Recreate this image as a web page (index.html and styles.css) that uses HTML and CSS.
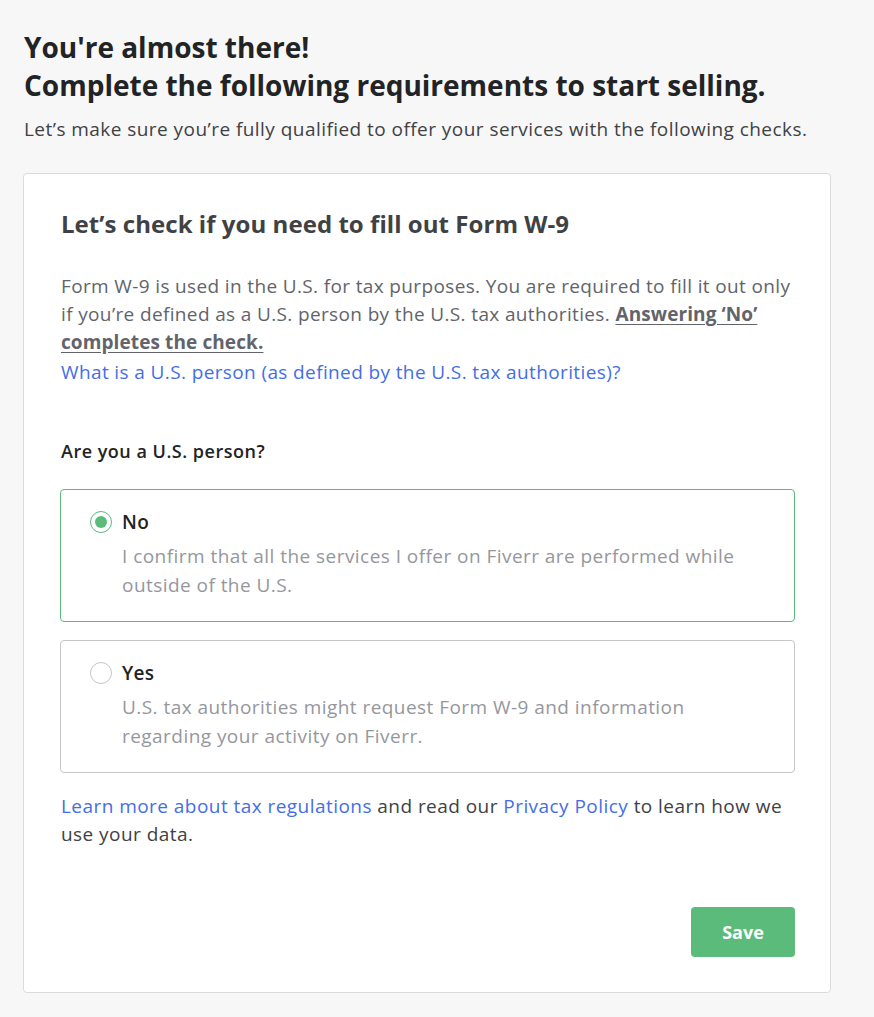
FILE: index.html
```html
<!DOCTYPE html>
<html lang="en">
<head>
<meta charset="utf-8">
<title>Requirements</title>
<link rel="stylesheet" href="styles.css">
</head>
<body>
<main class="page">
  <h1 class="headline">You're almost there!<br>Complete the following requirements to start selling.</h1>
  <p class="subtitle">Let’s make sure you’re fully qualified to offer your services with the following checks.</p>

  <section class="card">
    <h2 class="card-title">Let’s check if you need to fill out Form W-9</h2>
    <p class="intro">Form W-9 is used in the U.S. for tax purposes. You are required to fill it out only if you’re defined as a U.S. person by the U.S. tax authorities. <strong class="emph">Answering ‘No’ completes the check.</strong></p>
    <a class="link block-link" href="#">What is a U.S. person (as defined by the U.S. tax authorities)?</a>

    <p class="question">Are you a U.S. person?</p>

    <div class="options">
      <label class="option selected">
        <span class="radio checked"><span class="dot"></span></span>
        <span class="option-body">
          <span class="option-label">No</span>
          <span class="option-desc">I confirm that all the services I offer on Fiverr are performed while outside of the U.S.</span>
        </span>
      </label>
      <label class="option">
        <span class="radio"></span>
        <span class="option-body">
          <span class="option-label">Yes</span>
          <span class="option-desc">U.S. tax authorities might request Form W-9 and information regarding your activity on Fiverr.</span>
        </span>
      </label>
    </div>

    <p class="footnote"><a class="link" href="#">Learn more about tax regulations</a> and read our <a class="link" href="#">Privacy Policy</a> to learn how we use your data.</p>

    <div class="actions">
      <button class="save" type="button">Save</button>
    </div>
  </section>
</main>
</body>
</html>
```

FILE: styles.css
```css
* { box-sizing: border-box; }

html, body {
  margin: 0;
  background: #f7f7f7;
}

body {
  font-family: "Open Sans", "Liberation Sans", sans-serif;
  color: #62646a;
}

.page {
  padding: 28px 43px 24px 23px;
}

.headline {
  margin: 0 0 0 1px;
  font-size: 28px;
  line-height: 38px;
  font-weight: 700;
  color: #222325;
}

.subtitle {
  margin: 13px 0 0 1px;
  font-size: 19px;
  line-height: 24px;
  letter-spacing: 0.45px;
  color: #404145;
}

.card {
  margin-top: 32px;
  background: #fff;
  border: 1px solid #dadbdd;
  border-radius: 4px;
  padding: 35px 35px 35px 37px;
}

.card-title {
  margin: 0;
  font-size: 24px;
  line-height: 30px;
  font-weight: 700;
  letter-spacing: 0.05px;
  color: #404145;
}

.intro {
  margin: 33px 0 0;
  font-size: 19px;
  line-height: 28px;
  letter-spacing: 0.36px;
  color: #62646a;
}

.emph {
  font-weight: 700;
  color: #62646a;
  letter-spacing: 0.1px;
  text-decoration: underline;
  text-underline-offset: 3px;
}

.link {
  color: #446ee7;
  text-decoration: none;
}

.block-link {
  display: block;
  margin-top: 2px;
  font-size: 19px;
  line-height: 28px;
  letter-spacing: 0.38px;
}

.question {
  margin: 53px 0 0;
  font-size: 18px;
  line-height: 24px;
  letter-spacing: 0.5px;
  font-weight: 600;
  color: #222325;
}

.options {
  margin-top: 26px;
  margin-left: -1px;
  display: flex;
  flex-direction: column;
  gap: 18px;
}

.option {
  display: flex;
  align-items: flex-start;
  gap: 10px;
  border: 1px solid #c5c6c9;
  border-radius: 4px;
  padding: 20px 20px 21px 29px;
  cursor: pointer;
}

.option.selected {
  border-color: #5bbb7b;
}

.radio {
  flex: none;
  width: 22px;
  height: 22px;
  margin-top: 1px;
  border: 1px solid #c5c6c9;
  border-radius: 50%;
  display: flex;
  align-items: center;
  justify-content: center;
}

.radio.checked {
  border-color: #5bbb7b;
}

.dot {
  width: 12px;
  height: 12px;
  border-radius: 50%;
  background: #5bbb7b;
}

.option-body {
  display: flex;
  flex-direction: column;
  gap: 8px;
}

.option-label {
  font-size: 19px;
  line-height: 24px;
  letter-spacing: 0.3px;
  font-weight: 600;
  color: #222325;
}

.option-desc {
  font-size: 19px;
  line-height: 29px;
  letter-spacing: 0.45px;
  color: #95979d;
}

.footnote {
  margin: 19px 0 0;
  font-size: 19px;
  line-height: 28px;
  letter-spacing: 0.45px;
  color: #404145;
}

.actions {
  margin-top: 59px;
  display: flex;
  justify-content: flex-end;
}

.save {
  width: 104px;
  height: 50px;
  border: none;
  border-radius: 4px;
  background: #5bbb7b;
  color: #fff;
  font-family: "Open Sans", "Liberation Sans", sans-serif;
  font-size: 18px;
  font-weight: 700;
  cursor: pointer;
}
```
